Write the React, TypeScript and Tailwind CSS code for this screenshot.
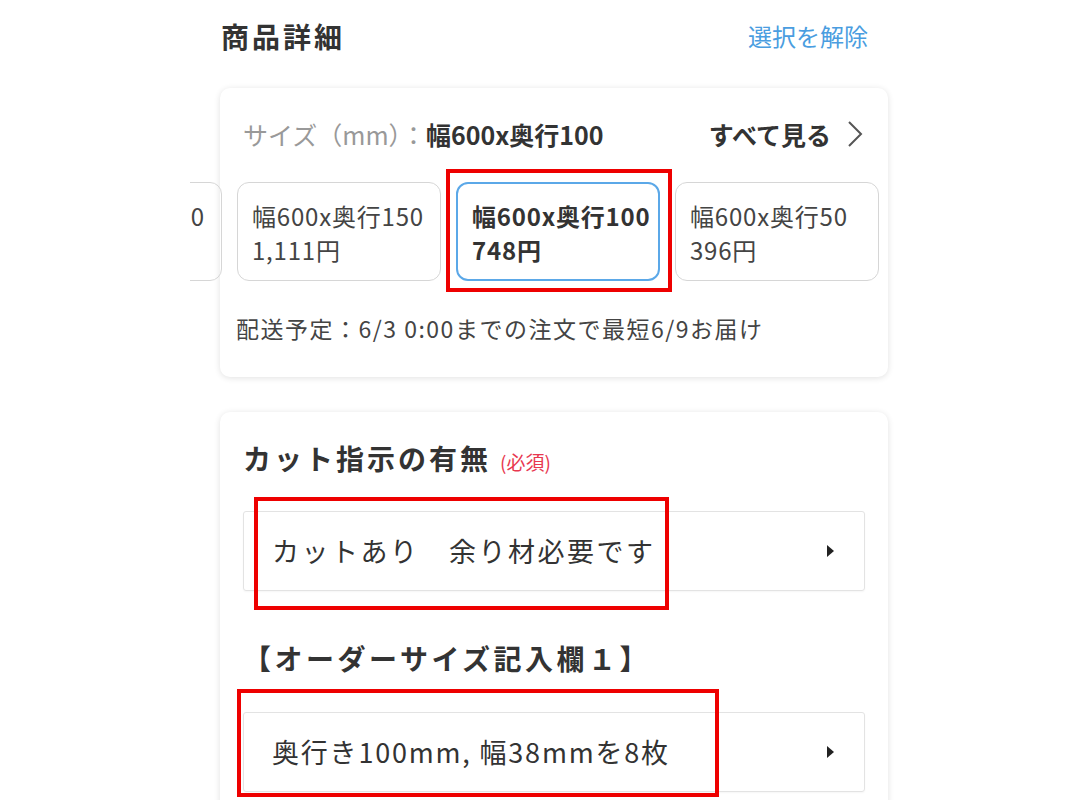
type Option = {
    label: string,
    price: string,
    selected?: boolean
}

const options: Option[] = [
    {label: "幅600x奥行200", price: "1,480円"},
    {label: "幅600x奥行150", price: "1,111円"},
    {label: "幅600x奥行100", price: "748円", selected: true},
    {label: "幅600x奥行50", price: "396円"},
]

const font = "font-['Noto_Sans_CJK_JP','Noto_Sans',sans-serif]"

function SelectRow({text, spacing}: { text: string, spacing: string }) {
    return (
        <div
            className="flex items-center justify-between h-[80px] border border-[#e3e3e3] rounded-[3px] pl-[28px] pr-[30px] shadow-[0_1px_2px_rgba(0,0,0,0.04)]">
            <span className={"text-[27px] text-[#333] " + spacing}>{text}</span>
            <span className="w-0 h-0 border-y-[6px] border-y-transparent border-l-[7px] border-l-[#222]"/>
        </div>
    )
}

export default function App() {
    return (
        <div className={"relative w-[1080px] h-[800px] bg-white overflow-hidden " + font}>
            <div className="ml-[220px] w-[668px]">
                <div className="flex items-center justify-between h-[72px] pl-[1px] pr-[20px]">
                    <span className="text-[28px] tracking-[3px] font-bold text-[#333]">商品詳細</span>
                    <span className="text-[24px] text-[#4a9de0]">選択を解除</span>
                </div>

                <div className="mt-[16px] h-[289px] bg-white rounded-[10px] shadow-[0_1px_6px_rgba(0,0,0,0.12)]">
                    <div className="flex items-center justify-between pt-[29px] pl-[23px] pr-[25px]">
                        <div className="text-[25px] leading-[34px]">
                            <span className="text-[#999]">サイズ（mm）：</span>
                            <span className="font-bold text-[#333]">幅600x奥行100</span>
                        </div>
                        <div className="flex items-center gap-[16px] text-[25px] leading-[34px] font-bold text-[#333]">
                            すべて見る
                            <svg width="16" height="26" viewBox="0 0 16 26" fill="none">
                                <polyline points="2,1 14,13 2,25" stroke="#555" strokeWidth="2"/>
                            </svg>
                        </div>
                    </div>

                    <div className="-ml-[30px] w-[698px] overflow-hidden mt-[31px]">
                        <div className="flex gap-[15px] -ml-[172px]">
                            {options.map(option => (
                                <div key={option.label}
                                     className={"shrink-0 w-[204px] h-[99px] rounded-[12px] pl-[14px] leading-[34px] text-[24px] tracking-[0.8px] " +
                                         (option.selected ? "border-2 border-[#5ba8e8] pt-[15px] font-bold text-[#333]" : "border border-[#d6d6d6] pt-[16px] text-[#444]")}>
                                    <div>{option.label}</div>
                                    <div>{option.price}</div>
                                </div>
                            ))}
                        </div>
                    </div>

                    <div className="pl-[16px] mt-[30px] text-[23px] leading-[34px] tracking-[1.5px] text-[#444]">
                        配送予定：6/3 0:00までの注文で最短6/9お届け
                    </div>
                </div>

                <div className="mt-[35px] h-[420px] bg-white rounded-[10px] shadow-[0_1px_6px_rgba(0,0,0,0.12)] px-[23px] pt-[29px]">
                    <div className="flex items-baseline leading-[34px]">
                        <span className="text-[28px] tracking-[3px] font-bold text-[#333]">カット指示の有無</span>
                        <span className="text-[19px] text-[#e8384f] ml-[9px]">(必須)</span>
                    </div>
                    <div className="mt-[32px]">
                        <SelectRow text="カットあり　余り材必要です" spacing="tracking-[2.5px]"/>
                    </div>
                    <div className="mt-[50px] text-[28px] leading-[34px] tracking-[3.5px] font-bold text-[#333]">
                        【オーダーサイズ記入欄１】
                    </div>
                    <div className="mt-[37px]">
                        <SelectRow text="奥行き100mm, 幅38mmを8枚" spacing="tracking-[1.8px]"/>
                    </div>
                </div>
            </div>

            <div className="absolute left-[446px] top-[169px] w-[226px] h-[123px] border-[4px] border-[#ee0000]"/>
            <div className="absolute left-[254px] top-[497px] w-[415px] h-[113px] border-[4px] border-[#ee0000]"/>
            <div className="absolute left-[237px] top-[689px] w-[482px] h-[108px] border-[4px] border-[#ee0000]"/>
        </div>
    )
}
